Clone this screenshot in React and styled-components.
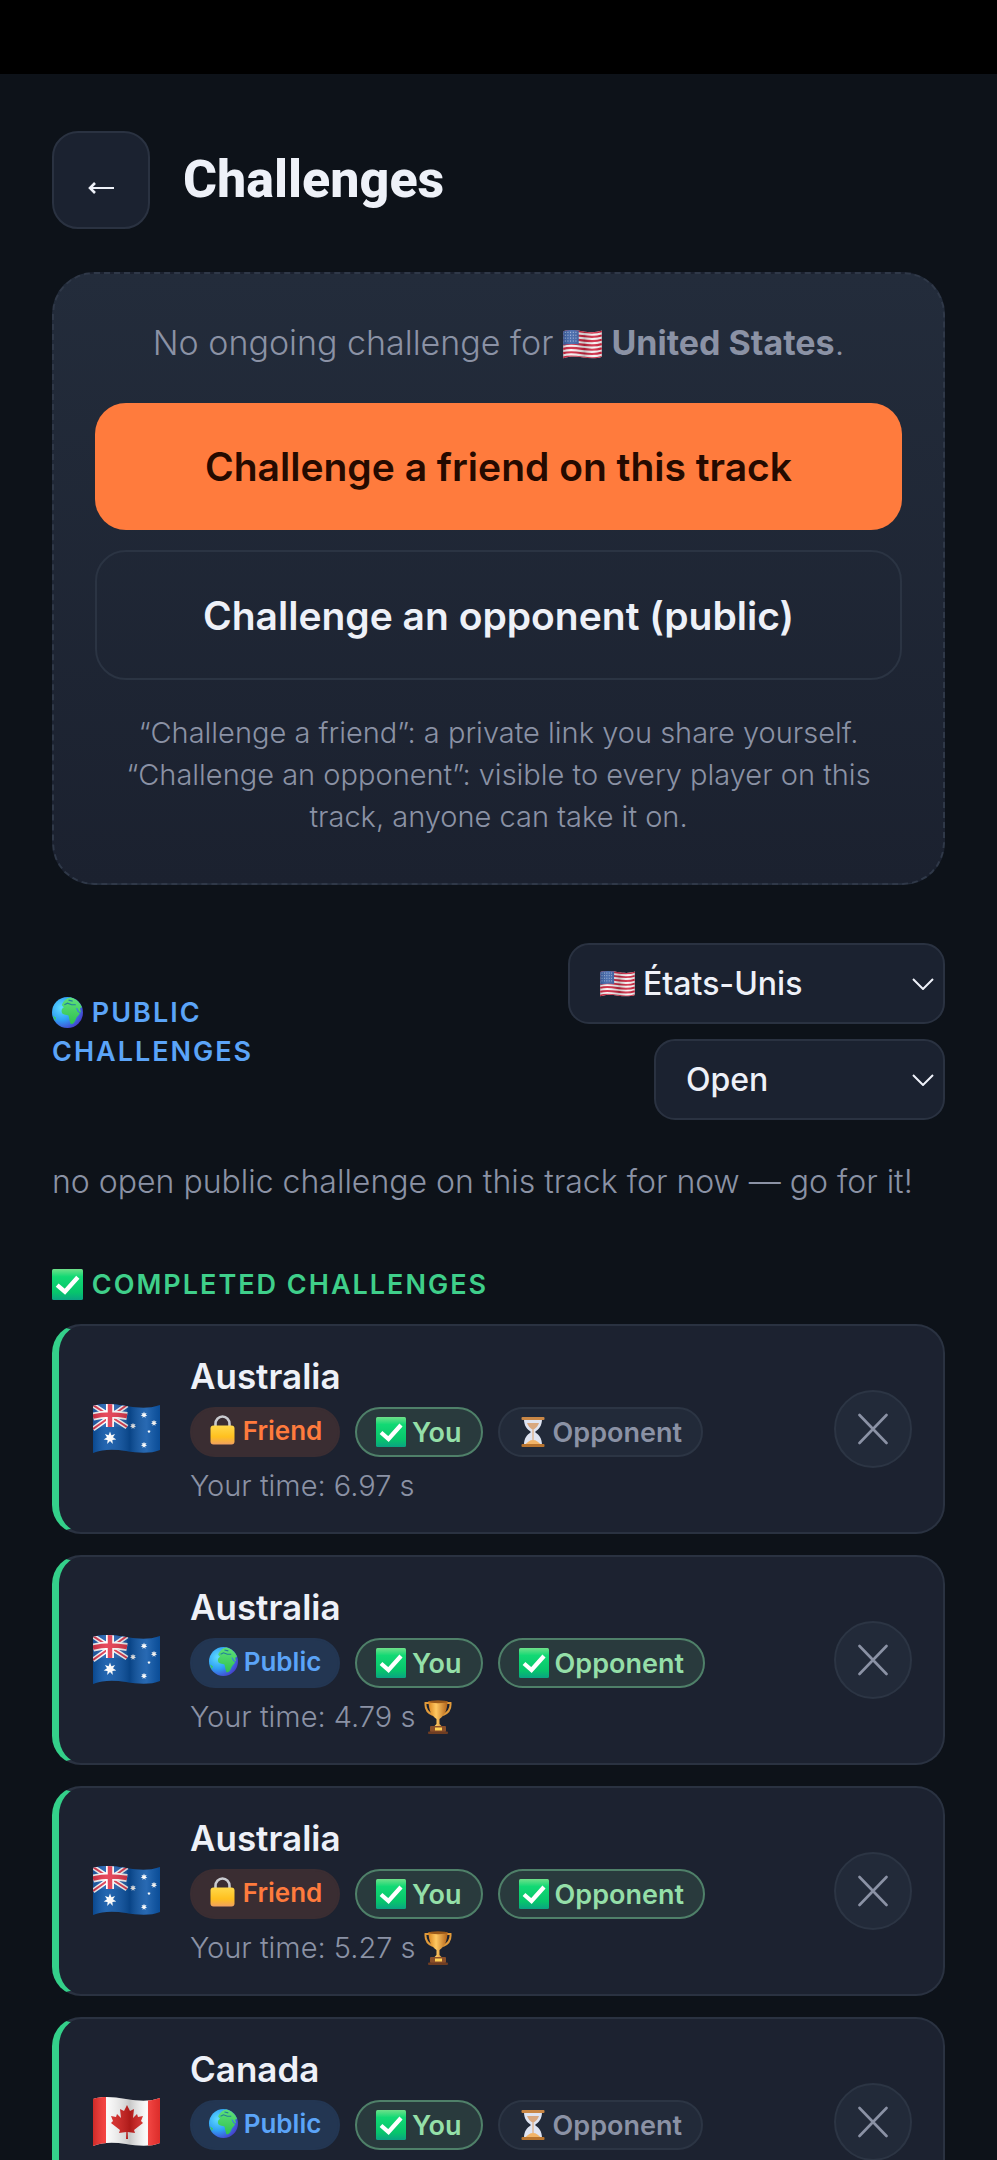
import React, {useState} from 'react';
import styled, {createGlobalStyle} from 'styled-components';

// #region styles
const GlobalStyle = createGlobalStyle`
  * {
    box-sizing: border-box;
  }

  body {
    margin: 0;
    background: #0d1219;
  }

  button, select {
    font-family: inherit;
    cursor: pointer;
  }
`;

const Page = styled.div`
  height: 100vh;
  overflow-y: auto;
  scrollbar-width: none;
  background: #0d1219;
  color: #eef1f8;
  font-family: 'Inter', 'Noto Sans', sans-serif;
`;

const StatusBar = styled.div`
  height: 74px;
  background: #000000;
`;

const Main = styled.main`
  padding: 57px 52px 40px;
`;

const Header = styled.header`
  display: flex;
  align-items: center;
  gap: 33px;
  margin-bottom: 43px;
`;

const BackButton = styled.button`
  width: 98px;
  height: 98px;
  padding: 16px 0 0;
  display: flex;
  align-items: center;
  justify-content: center;
  border: 2px solid #2a3241;
  border-radius: 26px;
  background: #1b2230;
  color: #eef1f8;
`;

const Title = styled.h1`
  margin: 0;
  font-family: 'Roboto', sans-serif;
  font-size: 52px;
  line-height: 64px;
  font-weight: 800;
`;

const Panel = styled.section`
  padding: 42px 41px 45px;
  border: 2px dashed #2f3848;
  border-radius: 42px;
  background: linear-gradient(#232c3b, #1b212f);
  text-align: center;
`;

const PanelText = styled.p`
  margin: 0 0 33px;
  font-size: 34px;
  line-height: 54px;
  font-weight: 300;
  color: #8b92a5;

  strong {
    font-weight: 700;
  }
`;

const ActionButton = styled.button`
  display: block;
  width: 100%;
  height: ${({$primary}) => ($primary ? '127px' : '130px')};
  margin-bottom: ${({$primary}) => ($primary ? '20px' : '32px')};
  border: ${({$primary}) => ($primary ? '0' : '2px solid #2b3443')};
  border-radius: 31px;
  background: ${({$primary}) => ($primary ? '#ff7b3d' : 'transparent')};
  color: ${({$primary}) => ($primary ? '#250a00' : '#eef1f8')};
  font-size: 39px;
  font-weight: 600;
`;

const Hint = styled.p`
  margin: 0 auto;
  max-width: 780px;
  font-size: 29px;
  line-height: 42px;
  font-weight: 300;
  color: #8b92a5;
`;

const FilterBar = styled.div`
  display: grid;
  grid-template-columns: 1fr 2fr;
  align-items: center;
  margin: 58px 0 35px;
`;

const SectionTitle = styled.h2`
  margin: 0;
  font-size: 27px;
  line-height: 39px;
  font-weight: 600;
  letter-spacing: 2px;
  text-transform: uppercase;
  color: ${({$color}) => $color};
`;

const Filters = styled.div`
  display: flex;
  flex-direction: column;
  align-items: flex-end;
  gap: 15px;
`;

const SelectBox = styled.label`
  width: ${({$wide}) => ($wide ? '377px' : '291px')};
  height: 81px;
  padding: 0 9px 0 30px;
  display: flex;
  align-items: center;
  gap: 8px;
  border: 2px solid #2a3241;
  border-radius: 21px;
  background: #1b2230;
`;

const Select = styled.select`
  flex: 1;
  min-width: 0;
  height: 100%;
  padding: 0;
  border: 0;
  outline: 0;
  appearance: none;
  background: transparent;
  color: #eef1f8;
  font-size: 32px;
  font-weight: 500;
`;

const Empty = styled.p`
  margin: 0 0 56px;
  font-size: 32px;
  line-height: 54px;
  font-weight: 300;
  color: #8b92a5;
`;

const List = styled.ul`
  margin: 20px 0 0;
  padding: 0;
  display: flex;
  flex-direction: column;
  gap: 21px;
  list-style: none;
`;

const Card = styled.li`
  padding: 28px 31px 28px 34px;
  display: flex;
  align-items: center;
  gap: 30px;
  border: 2px solid #2a3241;
  border-left: 7px solid #34d08a;
  border-radius: 29px;
  background: #1c2230;
`;

const CardBody = styled.div`
  flex: 1;
  min-width: 0;
`;

const CardName = styled.h3`
  margin: 0 0 9px;
  font-size: 35px;
  line-height: 44px;
  font-weight: 600;
`;

const Chips = styled.div`
  display: flex;
  gap: 15px;
`;

const tones = {
  friend: {bg: '#3a2d32', border: '#3a2d32', text: '#ff7b3d'},
  public: {bg: '#233652', border: '#233652', text: '#5ba4f8'},
  done: {bg: '#293a3d', border: '#4f8069', text: '#94dfa8'},
  waiting: {bg: '#222a39', border: '#2c3544', text: '#8b92a5'},
};

const Chip = styled.span`
  height: 50px;
  padding: 0 19px;
  display: flex;
  align-items: center;
  justify-content: center;
  gap: 6px;
  border: 2px solid ${({$tone}) => tones[$tone].border};
  border-radius: 25px;
  background: ${({$tone}) => tones[$tone].bg};
  color: ${({$tone}) => tones[$tone].text};
  font-size: 27px;
  font-weight: 600;
`;

const KindChip = styled(Chip)`
  min-width: 150px;
  padding: 0 14px 4px;
  font-size: 26px;
`;

const CardTime = styled.p`
  min-height: 36px;
  margin: 11px 0 0;
  font-size: 29px;
  line-height: 36px;
  font-weight: 300;
  color: #8b92a5;
`;

const CloseButton = styled.button`
  width: 78px;
  height: 78px;
  padding: 0;
  display: flex;
  align-items: center;
  justify-content: center;
  border: 2px solid #2c3544;
  border-radius: 50%;
  background: #222a39;
  color: #8b92a5;
`;

const Icon = styled.svg`
  flex: none;
  width: ${({$w}) => $w}px;
  height: ${({$h}) => $h}px;
`;

const InlineIcon = styled(Icon)`
  vertical-align: -${({$drop}) => $drop || 6}px;
`;
// #endregion

// #region icons
const FLAG_SHAPE = 'M0 2C10-1 20 0 33 2S55 5 67 1V46C57 50 45 49 33 47S10 45 0 49Z';

const FlagFrame = ({id, label, width, children}) => (
  <InlineIcon
    $w={width}
    $h={Math.round((width * 50) / 67)}
    $drop={4}
    viewBox="0 0 67 50"
    role="img"
    aria-label={label}
  >
    <defs>
      <clipPath id={`${id}-clip`}><path d={FLAG_SHAPE}/></clipPath>
      <linearGradient id={`${id}-shade`}>
        <stop offset="0" stopColor="#000" stopOpacity=".16"/>
        <stop offset=".2" stopColor="#fff" stopOpacity=".1"/>
        <stop offset=".55" stopColor="#000" stopOpacity=".2"/>
        <stop offset=".8" stopColor="#fff" stopOpacity=".12"/>
        <stop offset="1" stopColor="#000" stopOpacity=".1"/>
      </linearGradient>
    </defs>
    <g clipPath={`url(#${id}-clip)`}>
      {children}
      <rect width="67" height="50" fill={`url(#${id}-shade)`}/>
    </g>
  </InlineIcon>
);

const UsFlag = ({width}) => (
  <FlagFrame id="us" label="United States" width={width}>
    <rect width="67" height="50" fill="#f7f3f4"/>
    {[0, 1, 2, 3, 4, 5, 6].map(i => (
      <path key={i} d={`M0 ${3 + i * 7.4}c10-3 20-2 33 0s22 3 34-1`} fill="none" stroke="#d0243f" strokeWidth="3.7"/>
    ))}
    <path d="M0 0H27V25C18 24 9 24 0 26Z" fill="#3c62a8"/>
    {[4, 9, 14, 19].map(y => (
      <path key={y} d={`M3 ${y}H26`} stroke="#cdd9f0" strokeWidth="1.6" strokeDasharray="1.6 3"/>
    ))}
  </FlagFrame>
);

const star = (cx, cy, r) => {
  const points = [];
  for (let i = 0; i < 14; i++) {
    const a = (Math.PI * i) / 7 - Math.PI / 2;
    const d = i % 2 ? r * 0.48 : r;
    points.push(`${(cx + d * Math.cos(a)).toFixed(1)},${(cy + d * Math.sin(a)).toFixed(1)}`);
  }
  return <polygon points={points.join(' ')} fill="#fff"/>;
};

const AuFlag = ({width}) => (
  <FlagFrame id="au" label="Australia" width={width}>
    <rect width="67" height="50" fill="#0b55a8"/>
    <path d="M0 0H34V24C22 22 10 22 0 25Z" fill="#1f5fb0"/>
    <path d="M0 1L34 23M34 1L0 25" stroke="#fff" strokeWidth="5"/>
    <path d="M0 1L34 23M34 1L0 25" stroke="#e0394f" strokeWidth="2"/>
    <path d="M17 0V23M0 12.5C10 10 22 10 34 12" stroke="#fff" strokeWidth="8" fill="none"/>
    <path d="M17 0V23M0 12.5C10 10 22 10 34 12" stroke="#e5364b" strokeWidth="4.5" fill="none"/>
    {star(17, 34, 6.5)}
    {star(51, 11, 3.4)}
    {star(40, 22, 3.2)}
    {star(61, 19, 3.2)}
    {star(51, 41, 3.2)}
    {star(56, 27.5, 1.8)}
  </FlagFrame>
);

const CaFlag = ({width}) => (
  <FlagFrame id="ca" label="Canada" width={width}>
    <rect width="67" height="50" fill="#fafafa"/>
    <path d="M0 0H13V50H0ZM55 0H67V50H55Z" fill="#f5322f"/>
    <path
      d="M34 8L37 14L41 12L40 21L44 17L45 20L50 19L48 24L50 26L41 33L42 36L34.7 35L35 42H33L33.3 35L26 36L27 33L18 26L20 24L18 19L23 20L24 17L28 21L27 12L31 14Z"
      fill="#d9211f"
    />
  </FlagFrame>
);

const Globe = ({size}) => (
  <InlineIcon $w={size} $h={size} viewBox="0 0 30 30" aria-hidden="true">
    <defs>
      <radialGradient id="globe-sea" cx=".3" cy=".35" r=".8">
        <stop offset="0" stopColor="#5fdcff"/>
        <stop offset=".5" stopColor="#2fa0f5"/>
        <stop offset="1" stopColor="#4a2fc4"/>
      </radialGradient>
      <linearGradient id="globe-land" x1="0" y1="0" x2="0" y2="1">
        <stop offset="0" stopColor="#5fe07a"/>
        <stop offset="1" stopColor="#2fc24f"/>
      </linearGradient>
    </defs>
    <circle cx="15" cy="15" r="15" fill="url(#globe-sea)"/>
    <path
      d="M9.5 8C11 4 14 1 18 .5C23 1.5 27 5 29 10L27 11L28 15L26 14L24.5 11L23 10.5L25 14.5L27 15.5C26 18 23.5 19.5 23 21.5C22 24.5 20 27 18 26C17 23 16.5 20 16 18C14 17 11.5 17.5 10 16C8.5 13.5 9.5 11 11.5 10Z"
      fill="url(#globe-land)"
    />
    <path d="M12 7.5L15 6L19 7.5L23 7.5M16 3L20 4" stroke="#22809a" strokeWidth="1.1" fill="none"/>
    <path d="M1 18L4 20L3 23Z" fill="#39cc5c"/>
  </InlineIcon>
);

const Check = ({size}) => (
  <InlineIcon $w={size} $h={size} viewBox="0 0 30 30" aria-hidden="true">
    <defs>
      <linearGradient id="check-bg" x1="0" y1="0" x2="0" y2="1">
        <stop offset="0" stopColor="#6fe08a"/>
        <stop offset=".25" stopColor="#12d974"/>
        <stop offset=".75" stopColor="#07c56c"/>
        <stop offset="1" stopColor="#0aa382"/>
      </linearGradient>
    </defs>
    <rect width="30" height="30" rx="1.5" fill="url(#check-bg)"/>
    <path d="M5 15.5L12.5 22L25 8" fill="none" stroke="#fff" strokeWidth="4.2"/>
  </InlineIcon>
);

const Lock = () => (
  <Icon $w={29} $h={30} viewBox="0 0 29 30" aria-hidden="true">
    <defs>
      <linearGradient id="lock-body" x1="0" y1="0" x2="0" y2="1">
        <stop offset="0" stopColor="#ffd84a"/>
        <stop offset=".6" stopColor="#ffc01f"/>
        <stop offset="1" stopColor="#f0a060"/>
      </linearGradient>
    </defs>
    <path d="M7.5 13V9a7 7.5 0 0 1 14 0V13" fill="none" stroke="#c9cbd0" strokeWidth="2.6"/>
    <rect x="2.5" y="10.5" width="24" height="19" rx="3" fill="url(#lock-body)"/>
  </Icon>
);

const Hourglass = () => (
  <Icon $w={28} $h={30} viewBox="1 0 28 30" aria-hidden="true">
    <path d="M6 2H24C24 9 21 12 17 15C21 18 24 21 24 28H6C6 21 9 18 13 15C9 12 6 9 6 2Z" fill="#dfe4f2"/>
    <path d="M9 6H21C20 9 18 11 15 13C12 11 10 9 9 6Z" fill="#d9a880"/>
    <path d="M7 28C9 25 12 23 15 23S21 25 23 28Z" fill="#f2b468"/>
    <path d="M14.5 13H15.5V23H14.5Z" fill="#e0a268"/>
    <rect x="3.5" y="0" width="23" height="3" rx="1" fill="#c98746"/>
    <rect x="3.5" y="27" width="23" height="3" rx="1" fill="#b8742f"/>
  </Icon>
);

const Trophy = () => (
  <InlineIcon $w={28} $h={34} $drop={7} viewBox="0 0 28 34" role="img" aria-label="Winner">
    <defs>
      <linearGradient id="trophy-cup">
        <stop offset="0" stopColor="#d9851f"/>
        <stop offset=".4" stopColor="#ffc861"/>
        <stop offset="1" stopColor="#b3631a"/>
      </linearGradient>
    </defs>
    <path d="M5 3H1.5C1 9 4 13 9 15M23 3H26.5C27 9 24 13 19 15" fill="none" stroke="#e09a3a" strokeWidth="2"/>
    <path d="M4.5 1H23.5C23.5 11 20 16 15.5 19V24L18.5 27H9.5L12.5 24V19C8 16 4.5 11 4.5 1Z" fill="url(#trophy-cup)"/>
    <ellipse cx="14" cy="1.8" rx="9.5" ry="1.5" fill="#9c5a1a"/>
    <rect x="6" y="26" width="16" height="6" rx="1" fill="#8a4f2a"/>
    <rect x="11" y="27.5" width="7" height="3" fill="#ffd257"/>
    <rect x="4" y="31.5" width="20" height="2.5" rx="1" fill="#6e3d22"/>
  </InlineIcon>
);

const Arrow = () => (
  <Icon $w={26} $h={12} viewBox="0 0 26 12" fill="none" stroke="currentColor" strokeWidth="2" aria-hidden="true">
    <path d="M26 6H2"/>
    <path d="M7 1L2 6L7 11" strokeWidth="2.6"/>
  </Icon>
);

const Chevron = () => (
  <Icon $w={22} $h={12} viewBox="0 0 22 12" fill="none" stroke="#eef1f8" strokeWidth="2" aria-hidden="true">
    <path d="M1 1L11 11L21 1"/>
  </Icon>
);

const Cross = () => (
  <Icon
    $w={30}
    $h={32}
    viewBox="0 0 30 32"
    fill="none"
    stroke="currentColor"
    strokeWidth="2.6"
    strokeLinecap="round"
    aria-hidden="true"
  >
    <path d="M1.5 2L28.5 30M28.5 2L1.5 30"/>
  </Icon>
);
// #endregion

const challenges = [
  {id: 1, country: 'Australia', Flag: AuFlag, kind: 'friend', opponentDone: false, time: '6.97 s'},
  {id: 2, country: 'Australia', Flag: AuFlag, kind: 'public', opponentDone: true, time: '4.79 s', won: true},
  {id: 3, country: 'Australia', Flag: AuFlag, kind: 'friend', opponentDone: true, time: '5.27 s', won: true},
  {id: 4, country: 'Canada', Flag: CaFlag, kind: 'public', opponentDone: false},
];

const ChallengeCard = ({challenge, onRemove}) => {
  const {country, Flag, kind, opponentDone, time, won} = challenge;
  return (
    <Card>
      <Flag width={67}/>
      <CardBody>
        <CardName>{country}</CardName>
        <Chips>
          <KindChip $tone={kind}>
            {kind === 'friend' ? <Lock/> : <Globe size={29}/>}
            {kind === 'friend' ? 'Friend' : 'Public'}
          </KindChip>
          <Chip $tone="done"><Check size={30}/>You</Chip>
          <Chip $tone={opponentDone ? 'done' : 'waiting'}>
            {opponentDone ? <Check size={30}/> : <Hourglass/>}
            Opponent
          </Chip>
        </Chips>
        <CardTime>
          {time && `Your time: ${time} `}
          {won && <Trophy/>}
        </CardTime>
      </CardBody>
      <CloseButton type="button" aria-label={`Remove ${country} challenge`} onClick={onRemove}>
        <Cross/>
      </CloseButton>
    </Card>
  );
};

const App = () => {
  const [items, setItems] = useState(challenges);
  const [track, setTrack] = useState('us');
  const [status, setStatus] = useState('open');

  return (
    <Page>
      <GlobalStyle/>
      <StatusBar/>
      <Main>
        <Header>
          <BackButton type="button" aria-label="Back"><Arrow/></BackButton>
          <Title>Challenges</Title>
        </Header>

        <Panel>
          <PanelText>
            No ongoing challenge for <UsFlag width={39}/> <strong>United States</strong>.
          </PanelText>
          <ActionButton type="button" $primary>Challenge a friend on this track</ActionButton>
          <ActionButton type="button">Challenge an opponent (public)</ActionButton>
          <Hint>
            “Challenge a friend”: a private link you share yourself.
            “Challenge an opponent”: visible to every player on this track, anyone can take it on.
          </Hint>
        </Panel>

        <FilterBar>
          <SectionTitle $color="#5ba4f8"><Globe size={31}/> Public challenges</SectionTitle>
          <Filters>
            <SelectBox $wide>
              <UsFlag width={35}/>
              <Select aria-label="Track" value={track} onChange={e => setTrack(e.target.value)}>
                <option value="us">États-Unis</option>
                <option value="au">Australie</option>
                <option value="ca">Canada</option>
              </Select>
              <Chevron/>
            </SelectBox>
            <SelectBox>
              <Select aria-label="Status" value={status} onChange={e => setStatus(e.target.value)}>
                <option value="open">Open</option>
                <option value="completed">Completed</option>
              </Select>
              <Chevron/>
            </SelectBox>
          </Filters>
        </FilterBar>
        <Empty>no open public challenge on this track for now — go for it!</Empty>

        <SectionTitle $color="#3fcf8a"><Check size={31}/> Completed challenges</SectionTitle>
        <List>
          {items.map(challenge => (
            <ChallengeCard
              key={challenge.id}
              challenge={challenge}
              onRemove={() => setItems(items.filter(item => item.id !== challenge.id))}
            />
          ))}
        </List>
      </Main>
    </Page>
  );
};

export default App;
